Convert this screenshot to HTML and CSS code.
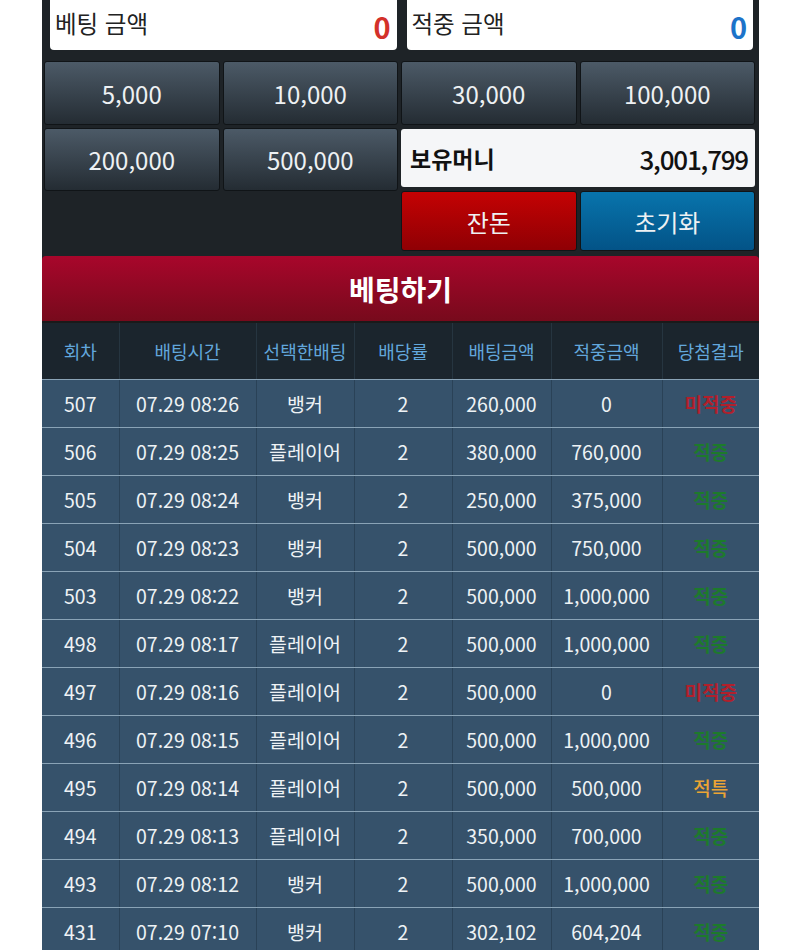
FILE: index.html
```html
<!DOCTYPE html>
<html lang="ko">
<head>
<meta charset="utf-8">
<link rel="stylesheet" href="styles.css">
</head>
<body>
<div class="panel">
  <div class="amounts">
    <div class="amount-box"><span class="amount-label">베팅 금액</span><span class="amount-val red">0</span></div>
    <div class="amount-box"><span class="amount-label">적중 금액</span><span class="amount-val blue">0</span></div>
  </div>
  <div class="controls">
    <div class="half">
      <div class="btn-row row1">
        <div class="chip">5,000</div>
        <div class="chip">10,000</div>
      </div>
      <div class="btn-row row2">
        <div class="chip">200,000</div>
        <div class="chip">500,000</div>
      </div>
    </div>
    <div class="half right">
      <div class="btn-row row1">
        <div class="chip">30,000</div>
        <div class="chip">100,000</div>
      </div>
      <div class="money"><span class="money-label">보유머니</span><span class="money-val">3,001,799</span></div>
      <div class="btn-row row3">
        <div class="action change">잔돈</div>
        <div class="action reset">초기화</div>
      </div>
    </div>
  </div>
  <div class="bet-bar">베팅하기</div>
  <table class="history">
    <colgroup>
      <col class="c1"><col class="c2"><col class="c3"><col class="c4"><col class="c5"><col class="c6"><col class="c7">
    </colgroup>
    <thead>
      <tr><th>회차</th><th>배팅시간</th><th>선택한배팅</th><th>배당률</th><th>배팅금액</th><th>적중금액</th><th>당첨결과</th></tr>
    </thead>
    <tbody>
      <tr><td>507</td><td>07.29 08:26</td><td>뱅커</td><td>2</td><td>260,000</td><td>0</td><td class="lose">미적중</td></tr>
      <tr><td>506</td><td>07.29 08:25</td><td>플레이어</td><td>2</td><td>380,000</td><td>760,000</td><td class="win">적중</td></tr>
      <tr><td>505</td><td>07.29 08:24</td><td>뱅커</td><td>2</td><td>250,000</td><td>375,000</td><td class="win">적중</td></tr>
      <tr><td>504</td><td>07.29 08:23</td><td>뱅커</td><td>2</td><td>500,000</td><td>750,000</td><td class="win">적중</td></tr>
      <tr><td>503</td><td>07.29 08:22</td><td>뱅커</td><td>2</td><td>500,000</td><td>1,000,000</td><td class="win">적중</td></tr>
      <tr><td>498</td><td>07.29 08:17</td><td>플레이어</td><td>2</td><td>500,000</td><td>1,000,000</td><td class="win">적중</td></tr>
      <tr><td>497</td><td>07.29 08:16</td><td>플레이어</td><td>2</td><td>500,000</td><td>0</td><td class="lose">미적중</td></tr>
      <tr><td>496</td><td>07.29 08:15</td><td>플레이어</td><td>2</td><td>500,000</td><td>1,000,000</td><td class="win">적중</td></tr>
      <tr><td>495</td><td>07.29 08:14</td><td>플레이어</td><td>2</td><td>500,000</td><td>500,000</td><td class="special">적특</td></tr>
      <tr><td>494</td><td>07.29 08:13</td><td>플레이어</td><td>2</td><td>350,000</td><td>700,000</td><td class="win">적중</td></tr>
      <tr><td>493</td><td>07.29 08:12</td><td>뱅커</td><td>2</td><td>500,000</td><td>1,000,000</td><td class="win">적중</td></tr>
      <tr><td>431</td><td>07.29 07:10</td><td>뱅커</td><td>2</td><td>302,102</td><td>604,204</td><td class="win">적중</td></tr>
    </tbody>
  </table>
</div>
</body>
</html>
```
FILE: styles.css
```css
* { box-sizing: border-box; }
html, body { margin: 0; padding: 0; background: #fff; }
body {
  font-family: "Noto Sans CJK KR", "Noto Sans", sans-serif;
  height: 950px;
  overflow: hidden;
}
.panel {
  margin-left: 42px;
  width: 717px;
  background: #1e2327;
  min-height: 950px;
}
.amounts {
  display: flex;
  gap: 10px;
  padding: 0 6px 0 8px;
}
.amount-box {
  flex: 1;
  height: 50px;
  background: #fff;
  border-radius: 0 0 4px 4px;
  display: flex;
  align-items: center;
  justify-content: space-between;
  padding: 0 6px 4px 5px;
}
.amount-label { font-size: 23.5px; color: #222; }
.amount-val { font-size: 29px; font-weight: 700; padding-top: 6px; }
.red { color: #d3312a; }
.blue { color: #1d73c9; }

.controls {
  display: flex;
  gap: 3px;
  padding: 11px 4px 0 2px;
}
.half { flex: 1; display: flex; flex-direction: column; gap: 3px; }
.half.right { gap: 4px; }
.btn-row { display: flex; gap: 3px; }
.row1 { height: 64px; }
.row2 { height: 63px; }
.row3 { height: 60px; }
.chip, .action {
  flex: 1;
  display: flex;
  align-items: center;
  justify-content: center;
  border: 1px solid #101417;
  border-radius: 3px;
  color: #eef1f3;
  font-size: 24px;
}
.chip {
  background: linear-gradient(#4c5a67, #242c33);
}
.money {
  height: 58px;
  background: #f5f6f8;
  border-radius: 3px;
  display: flex;
  align-items: center;
  justify-content: space-between;
  padding: 0 7px 0 9px;
  color: #111;
}
.money-label { font-size: 23px; font-weight: 700; }
.money-val { font-size: 26px; font-weight: 500; letter-spacing: -1.2px; }
.action { font-size: 24px; }
.action.change { background: linear-gradient(#c40203, #8f0004); }
.action.reset { background: linear-gradient(#0874ac, #035387); }

.bet-bar {
  margin-top: 5px;
  height: 67px;
  border-radius: 4px 4px 0 0;
  background: linear-gradient(#a8062b, #770a1c);
  color: #fff;
  font-size: 28px;
  font-weight: 700;
  display: flex;
  align-items: center;
  justify-content: center;
  border-bottom: 2px solid #1a1a1a;
}

.history {
  width: 717px;
  border-collapse: collapse;
  table-layout: fixed;
}
.c1 { width: 77px; }
.c2 { width: 137px; }
.c3 { width: 98px; }
.c4 { width: 98px; }
.c5 { width: 99px; }
.c6 { width: 111px; }
.c7 { width: 97px; }
.history th {
  height: 56px;
  background: #1b252d;
  color: #62a7dc;
  font-weight: 400;
  font-size: 18px;
  border-left: 1px solid #263540;
  border-bottom: 1px solid #8aa3b6;
  text-align: center;
  padding: 0;
}
.history td {
  height: 48px;
  background: #36526b;
  color: #eef2f5;
  font-size: 19.5px;
  text-align: center;
  border-left: 1px solid #2a4257;
  border-bottom: 1px solid #8aa3b6;
  padding: 1px 0 0;
  white-space: nowrap;
}
.history th:first-child, .history td:first-child { border-left: none; }
.history td.lose { color: #b1202c; font-weight: 700; font-size: 19px; }
.history td.win { color: #1d7a2c; font-weight: 700; font-size: 19px; }
.history td.special { color: #eba434; font-weight: 500; font-size: 19px; }
```
